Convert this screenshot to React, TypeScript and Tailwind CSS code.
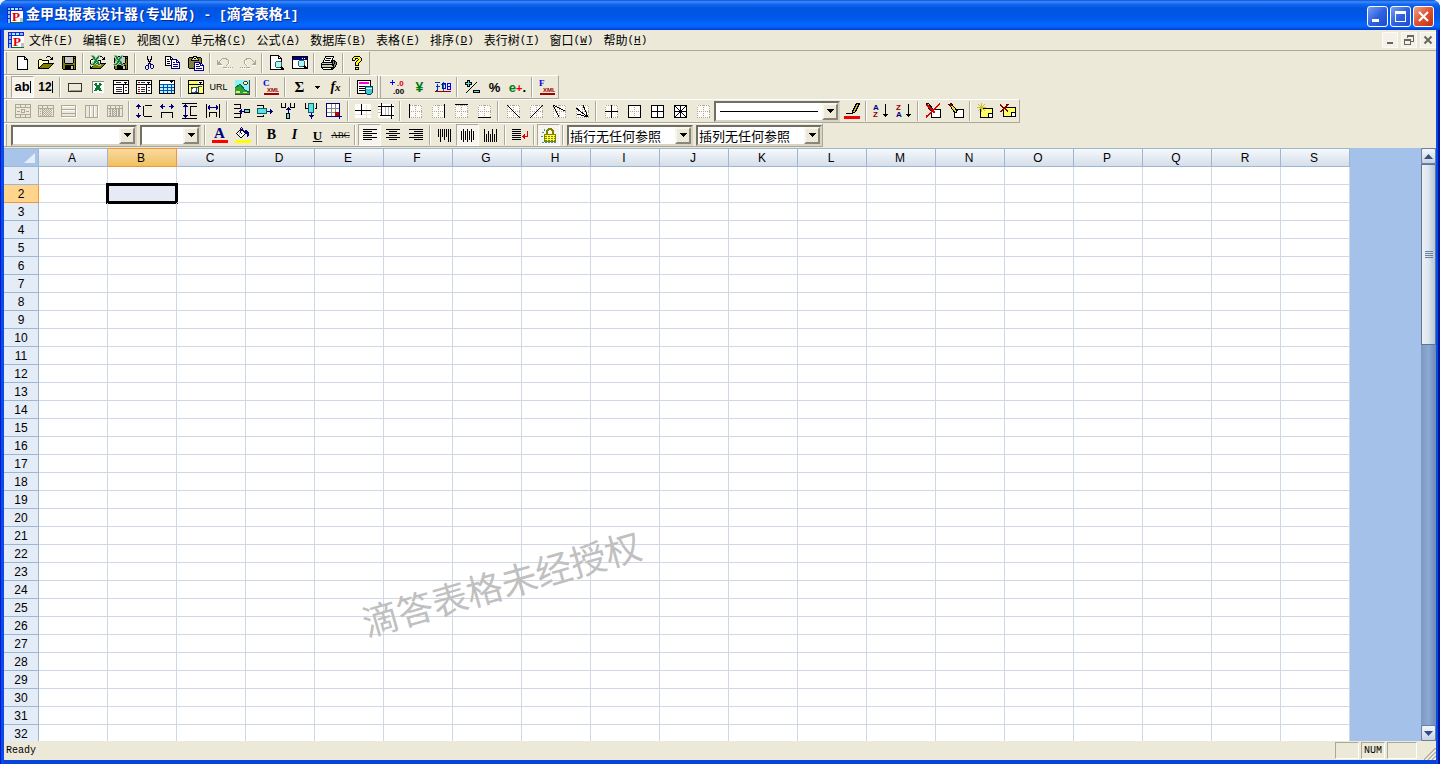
import { Fragment, type ReactNode } from "react";

const palette: Record<string, string> = {
  k: "#000000", w: "#ffffff", y: "#ffff80", Y: "#ffff00", o: "#808000", n: "#000080", b: "#0000ff",
  c: "#80ffff", t: "#008080", g: "#808080", l: "#c8c8c0", r: "#ff0000", m: "#900000", G: "#108040", e: "#aca899",
};

function Pixels({ rows }: { rows: string[] }) {
  const paths: Record<string, string> = {};
  rows.forEach((row, y) => {
    let x = 0;
    while (x < row.length) {
      const ch = row[x];
      let n = 1;
      while (row[x + n] === ch) n++;
      if (palette[ch]) paths[ch] = (paths[ch] ?? "") + `M${x} ${y}h${n}v1h-${n}z`;
      x += n;
    }
  });
  return <>{Object.keys(paths).map((k) => <path key={k} d={paths[k]} fill={palette[k]} />)}</>;
}

function Ico({ rows, children }: { rows?: string[]; children?: ReactNode }) {
  return (
    <svg width="16" height="16" viewBox="0 0 16 16" shapeRendering="crispEdges" aria-hidden="true" className="block shrink-0">
      {rows && <Pixels rows={rows} />}
      {children}
    </svg>
  );
}

function L({ d, c = "#000", f = "none", w = 1, dash }: { d: string; c?: string; f?: string; w?: number; dash?: string }) {
  return <path d={d} stroke={c} fill={f} strokeWidth={w} strokeDasharray={dash} />;
}

const newRows = [
  "", "..kkkkkkkk", "..kwwwwwwkk", "..kwwwwwwkwk", "..kwwwwwwkkkk", "..kwwwwwwwwwk", "..kwwwwwwwwwk", "..kwwwwwwwwwk",
  "..kwwwwwwwwwk", "..kwwwwwwwwwk", "..kwwwwwwwwwk", "..kwwwwwwwwwk", "..kwwwwwwwwwk", "..kwwwwwwwwwk", "..kkkkkkkkkkk",
];
const openRows = [
  "", ".........kkk", "........k...k.k.", ".............kk.", ".kkk........kkk.", "kywykkkkkkk.....", "kwywywywywk.....",
  "kywywywywyk.....", "kwywykkkkkkkkkkk", "kywykoooooooook.", "kwykoooooooook..", "kykoooooooook...", "kkoooooooook....", "kkkkkkkkkkk.....",
];
const saveRows = [
  "", ".kkkkkkkkkkkkkk", ".kokllllllllkok", ".kokllllllllkkk", ".kokllllllllkok", ".kokllllllllkok", ".kokllllllllkok",
  ".kokllllllllkok", ".kookkkkkkkkook", ".kooooooooooook", ".kookkkkkkkkkok", ".kookkkkkkllkok", ".kookkkkkkllkok",
  ".kookkkkkkllkok", "..kkkkkkkkkkkkk",
];
const cutRows = [
  "", ".....k...k", ".....k...k", ".....k...k", ".....kk.kk", "......k.k", "......kkk", ".......k", "......nnn", "......n.nnn",
  "....nnn.n..n", "...n..n.n..n", "...n..n.n..n", "...n..n..nn", "....nn",
];
const copyRows = [
  "", "kkkkkk", "kwwwwkk", "kwwwwkwk", "kwkkwknnnnnn", "kwwwwwnwwwwnn", "kwkkkwnwwwwnwn", "kwwwwwnwnnwnnnn", "kwkkkwnwwwwwwwn",
  "kwwwwwnwnnnnnwn", "kkkkkknwwwwwwwn", "......nwnnnnnwn", "......nwwwwwwwn", "......nnnnnnnnn",
];
const pasteRows = [
  "", ".....kkkk", ".kkkkkyykkkkk", "kogokykkykogok", "kgokllllllkogk", "kogkkkkkkkkgok", "kgogogogogogok",
  "kogogonnnnnnok", "kgogognwwwwnnk", "kogogonwnnnwnwn", "kgogognwwwwwnnnn", "kogogonwnnnnwwwn", "kgogognwwwwwwwwn",
  ".kkkkknwnnnnnnwn", "......nwwwwwwwwn", "......nnnnnnnnnn",
];
const undoRows = [
  "", "", "", ".....eeeee", "....e....ee", "e..e.......e", "e.e........ew", "eee........ew", "eeee.......ew", "eeeee.....ew", ".wwwww...ew", "", "......eeee.e.e.e", ".......wwww.w.w.",
];
const redoRows = [
  "", "", "", "......eeeee", ".....ee....e", "....e.......e..e", "....ew.......e.e", "....ew........eee", "....ew.......eeee", ".....ew.....eeeee", "......ew....wwww", "", "e.e.e.eeee", ".w.w.w.wwww",
];
const printRows = [
  "", "....kkkkkkkkk", "....kwwwwwwwk", "...kwkkkkkwk", "...kwwwwwwwk", "..kwkkkkkwkkkk", "..kwwwwwwwkkgkk", ".kkkkkkkkkkkgkgk", "kllllllllllkgkgk",
  "kkkkkkkkkkkkkggk", "klllllllYYlkkgk", "klllllllllllkgk", "kkkkkkkkkkkkkk", ".kwwwwwwwwkkk", "..kkkkkkkkkk",
];
const helpRows = [
  "", "....kkkkkk", "...kYYYYYYk", "..kYYkkkYYYk", "..kYYk..kYYk", "..kkk..kYYYk", "......kYYYk", ".....kYYYk", ".....kYYk", ".....kYYk",
  ".....kkkk", "", ".....kkkk", ".....kYYk", ".....kkkk",
];
const bucketRows = [
  "......n", ".....n.n", ".....nkn", "....knkkn.nn", "...kwnwwknnnn", "..kwlkwwwknnnn", ".kwwlwkwwwknnn", "..kwlwwwwk..nn", "...kwwwwk...nn", "....kwwk....n", ".....kk",
];

function Magnifier({ x = 0, y = 0 }: { x?: number; y?: number }) {
  return (
    <g transform={`translate(${x} ${y})`}>
      <circle cx="9.5" cy="9.5" r="3.2" fill="#9ff" stroke="#555" />
      <L d="M12 12l3 3" w={2} />
    </g>
  );
}

function ExcelMark() {
  return (
    <>
      <path d="M0 0h4l2 3 2-3h3L7.500 5 11 10H7.500L5.500 7.500 3.500 10H0l4-5z" fill="#128040" stroke="#e6f2e6" strokeWidth=".6" />
      <L d="M1 1l7 9M2 9l6-8" c="#a8d8b8" dash="1 1" />
    </>
  );
}

const hatch = "M2 6.5h12M2 8.5h12M2 10.5h12M2 12.5h12";

function Dotted() {
  return (
    <>
      <path d="M2 2h13v13H2z" fill="#fbfaf5" />
      <L d="M2.5 2.5h12v12h-12zM8.5 2v13M2 8.5h13" c="#aaa69a" dash="1 1" />
    </>
  );
}
const edge = (d: string) => <Ico><Dotted /><L d={d} /></Ico>;

const arrowsV = (x: number) => (
  <path d={`M${x} 1h1v1h1v1h1v1h-2v2h-1v-2h-2v-1h1v-1h1zM${x} 15h1v-1h1v-1h1v-1h-2v-2h-1v2h-2v1h1v1h1z`} fill="#000080" />
);

function Mini({ x, y, s, c, t, fam = "Liberation Sans" }: { x: number; y: number; s: number; c: string; t: string; fam?: string }) {
  return <text x={x} y={y} fontSize={s} fill={c} fontWeight="bold" fontFamily={`${fam}, sans-serif`}>{t}</text>;
}

const gray = "#aca899";
const navy = "#000080";
const cyan = "#5fe0e8";

const icons: Record<string, ReactNode> = {
  新建: <Ico rows={newRows} />,
  打开: <Ico rows={openRows} />,
  保存: <Ico rows={saveRows} />,
  导入Excel: <Ico rows={openRows}><ExcelMark /></Ico>,
  导出Excel: <Ico rows={saveRows}><ExcelMark /></Ico>,
  剪切: <Ico rows={cutRows} />,
  复制: <Ico rows={copyRows} />,
  粘贴: <Ico rows={pasteRows} />,
  撤消: <Ico rows={undoRows} />,
  重做: <Ico rows={redoRows} />,
  打印预览: <Ico><L d="M1.5 .5h8l3 3v11h-11z" f="#fff" /><L d="M9.5 .5v3h3" /><Magnifier /></Ico>,
  页面设置: <Ico><L d="M.5 1.5h15v12H.5z" f="#fff" /><path d="M1 2h14v3H1z" fill="#000080" /><path d="M10 3h1v1h-1zM12 3h1v1h-1z" fill="#fff" /><Magnifier y={-1} /></Ico>,
  打印: <Ico rows={printRows} />,
  帮助主题: <Ico rows={helpRows} />,
  按钮: <Ico><rect x="1.5" y="4.5" width="13" height="8" rx="1" fill="#ece9d8" stroke="#333" /><L d="M3 11.5h11" c="#999" /></Ico>,
  复选框: <Ico><path d="M2 2h12v12H2z" fill="#fff" /><L d="M2.5 14V2.5H14" c="#888" /><L d="M5 4.500l6 7.500M11 4.500l-6 7.500" c="#067a2c" w={2.4} /></Ico>,
  下拉框: <Ico><L d="M.5 1.5h15v4H.5zM.5 5.5h10v9H.5z" f="#fff" /><L d="M10.5 5.500h5v9h-5z" f="#fff" /><L d="M3 3.500h5M3 8.500h6M3 10.500h6M3 12.500h6M12 8.500h2M12 11.500h2" c="#333" /><path d="M10 3h4l-2 2z" /></Ico>,
  列表框: <Ico><L d="M.5 1.5h15v4H.5zM.5 5.5h10v9H.5z" f="#fff" /><L d="M10.500 5.500h5v9h-5z" f="#fff" /><L d="M5 3.500h4M5 8.500h4M5 10.500h4M5 12.500h4M12 8.500h2M12 11.500h2" c="#333" /><L d="M2 3.500h2M2 8.500h2M2 10.500h2M2 12.500h2" c="#b00000" /><path d="M10 3h4l-2 2z" /></Ico>,
  表格下拉框: <Ico><L d="M.5 1.5h15v13H.5z" f="#fff" /><path d="M1 5h14v9H1z" fill="#b8f0ff" /><L d="M1 5.500h14M4.500 5v9M8.500 5v9M12.500 5v9M1 8.500h14M1 11.500h14" c="#0050b0" /><path d="M10 2h4l-2 2z" /></Ico>,
  日期控件: <Ico><L d="M.5 1.5h15v4H.5z" f="#fff" /><path d="M1 2h9v3H1zM1 6h14v8H1z" fill="#ffff66" /><path d="M10 3h4l-2 2z" /><L d="M.5 6v8.500h15V6" /><L d="M3.500 8.500h7v5h-7z" c="#234" f="#b8f4ff" /><circle cx="6" cy="11" r="2.500" fill="#fff" stroke="#357" /><L d="M8 10l3-3h3" c="#357" /></Ico>,
  图片: <Ico><path d="M1 1h14v14H1z" fill="#8ff0f4" /><L d="M15.500 1v14.500H1" c="#444" /><path d="M1 9l5-4 5 7h4v3H1z" fill="#2fa13a" /><L d="M1 9l5-4 5 6 4 2" c="#064" /><circle cx="11.500" cy="4" r="1.800" fill="#ffffa0" stroke="#333" /><path d="M2 12h4v2H2zM9 13h4v1H9z" fill="#e8f060" /></Ico>,
  HTML: <Ico><Mini x={0} y={7} s={9} c="#0000e0" t="C" fam="Liberation Serif" /><Mini x={4} y={13} s={6} c="#900" t="XML" /><path d="M1 14h15v2H1z" fill="#a00000" /></Ico>,
  数据集: <Ico><L d="M.5 1.500h13v13H.5z" f="#fff" /><path d="M2 3h10v2H2z" fill="#f0c" /><L d="M2 7.500h7M2 9.500h6M2 11.500h6" /><L d="M8.500 7.500h7v6l-2 2h-3l-2-2z" c="#045" f="#3cc8d0" /><L d="M9 9.500h6" c="#dff" /></Ico>,
  小数位: <Ico><Mini x={8} y={7} s={8} c="#e00000" t=".0" /><Mini x={4} y={15} s={8} c="#000" t=".00" /><L d="M1 3.500h5M3.500 1v5" c="#0000ff" /></Ico>,
  大写金额: <Ico><L d="M2.500 5v6h-2M0 3.500h5M1 7.500h4" c="#0030c0" /><L d="M8.500 3v9M6 5.500h5" c="#008020" /><L d="M7.500 4.500h3v5h-3zM12.500 4.500h3v6h-3zM12 7.500h3" c="#0000ff" /><path d="M0 12h16v1H0z" fill="#900" /></Ico>,
  加减: <Ico><L d="M3.500 1.500h2v2h2v2h-2v2h-2v-2h-2v-2h2z" f={cyan} /><L d="M2 14L13 3" /><L d="M9.500 11.500h6v2h-6z" f={cyan} /></Ico>,
  XML: <Ico><Mini x={0} y={7} s={9} c="#0000e0" t="F" fam="Liberation Serif" /><Mini x={4} y={13} s={6} c="#900" t="XML" /><path d="M1 14h15v2H1z" fill="#a00000" /></Ico>,
  合并单元格: <Ico><L d="M.5 1.500h15v13H.5zM0 4.500h16M0 11.500h16M5.500 1v3M10.500 1v3M5.500 11v3M10.500 11v3M2 8.500h3M11 8.500h3M6.500 6.500h3v3h-3z" c={gray} /></Ico>,
  取消合并: <Ico><L d="M.5 2.500h15v11H.5zM0 5.500h16M4.500 2v12M9.500 2v3" c={gray} /><L d={hatch} c={gray} dash="1 1" /><L d="M5 7.500h10M5 9.500h10M5 11.500h10" c={gray} dash="1 1" /></Ico>,
  按行合并: <Ico><L d="M.5 2.500h14v11H.5zM0 6.500h15M0 10.500h15" c={gray} /><L d="M1 14.500h14.500V3M1 7.500h13M1 3.500h13" c="#fff" /></Ico>,
  按列合并: <Ico><L d="M1.500 2.500h12v12h-12zM5.500 2v12M9.500 2v12" c={gray} /><L d="M6.500 3v11M10.500 3v11M14.500 3v12" c="#fff" /></Ico>,
  组合单元格: <Ico><L d="M.5 2.500h15v11H.5zM0 5.500h16M3.500 2v12M12.500 2v12M8 2v3" c={gray} /><L d={hatch} c={gray} dash="2 1" /><L d="M3 7.500h10M3 9.500h10M3 11.500h10" c={gray} dash="1 1" /></Ico>,
  最适行高: <Ico>{arrowsV(2)}<L d="M16 2.500H8.500M7.500 3v10M8 13.500h8" /></Ico>,
  最适列宽: <Ico><path d="M1 4v-1h1v-1h1v-1h1v2h2v1h-2v2h-1v-1h-1v-1zM15 4v-1h-1v-1h-1v-1h-1v2h-2v1h2v2h1v-1h1v-1z" fill={navy} /><L d="M2.500 15V9.500h11V15" /></Ico>,
  统一行高: <Ico>{arrowsV(3)}<L d="M0 .5h15M0 15.500h15M15 3.500H8.500v9H15" /><L d="M3.500 5v6" c={navy} /></Ico>,
  统一列宽: <Ico><L d="M3 4.500h10M4.500 2v5M11.500 2v5M3.500 3v3M12.500 3v3" c={navy} /><L d="M1.500 1v14M14.500 1v14M4.500 14V9.500h7V14" /></Ico>,
  插入行: <Ico><L d="M0 1.500h6.500v4H0M0 10.500h6.500v4H0" /><L d="M10.500 6.500h5v3h-5z" f={cyan} /><L d="M5 8.500h5M7.500 6v5M6.500 7v3" c={navy} /></Ico>,
  追加行: <Ico><L d="M0 2.500h6v2M0 13.500h6v-2" /><L d="M.5 5.500h9v5h-9z" f={cyan} c="#066" /><L d="M10 8.500h6M13.500 6v5M14.500 7v3" c={navy} /></Ico>,
  插入列: <Ico><L d="M1.500 0v4.500h4V0M10.500 0v4.500h4V0" /><L d="M6.500 10.500h3v5h-3z" f={cyan} /><L d="M8.500 4v6M6 6.500h5M7 5.500h3" c={navy} /></Ico>,
  追加列: <Ico><L d="M2.500 0v5h2M13.500 0v5h-2" /><L d="M5.500 .5h5v9h-5z" f={cyan} c="#066" /><L d="M8.500 10v6M6 12.500h5M7 13.500h3" c={navy} /></Ico>,
  表格尺寸: <Ico><L d="M.5 .5h13v13h-13z" c={navy} f="#fff" /><L d="M5.500 1v12M9.500 1v12M1 5.500h12M1 9.500h12" c="#888" /><path d="M9 9h5v5H9z" fill="#c00000" /><L d="M9 13.500h7M13.500 9v7" c={navy} /></Ico>,
  冻结: <Ico><path d="M0 1h16v14H0z" fill="#fff" /><L d="M0 11.500h16M11.500 2v13" c="#e8e4d8" /><L d="M0 7.500h16M6.500 1v11" /></Ico>,
  标题行: <Ico><path d="M0 1h16v14H0z" fill="#fff" /><L d="M0 6.500h3M0 9.500h3M7.500 4v8M10.500 4v8" c="#bbb" /><L d="M3.500 0v13M0 3.500h16M13.500 1v15M2 12.500h14" /></Ico>,
  左边框: edge("M2.500 1v14"),
  右边框: edge("M14.500 1v14"),
  上边框: edge("M2 1.500h13"),
  下边框: edge("M2 14.500h13"),
  斜线: edge("M2 2l13 13"),
  反斜线: edge("M2 15L15 2"),
  双斜线: edge("M2 2l12 6M2 2l6 12"),
  反双斜线: edge("M2 5l12 9M9 2l5 12M3 11l11 3"),
  内边框: edge("M8.500 2v13M2 8.500h13"),
  外边框: edge("M2.500 2.500h12v12h-12z"),
  全边框: <Ico><L d="M2.500 2.500h12v12h-12zM8.500 2v13M2 8.500h13" f="#fff" /></Ico>,
  米字框: <Ico><L d="M2.500 2.500h12v12h-12zM8.500 2v13M2 8.500h13M3 3l11 11M14 3L3 14" f="#fff" /></Ico>,
  无边框: edge(""),
  边框颜色: <Ico><path d="M0 13h16v3H0z" fill="#f00000" /><L d="M8.500 8.500l4-8h3l-4 8-3 2z" f="#c8b820" /><L d="M2 10.500h7" /></Ico>,
  升序: <Ico><Mini x={0} y={7} s={8} c={navy} t="A" /><Mini x={0} y={14} s={8} c="#900000" t="Z" /><L d="M12.500 1v13M10 11.500h5M11 12.500h3" /></Ico>,
  降序: <Ico><Mini x={0} y={7} s={8} c="#900000" t="Z" /><Mini x={0} y={14} s={8} c={navy} t="A" /><L d="M12.500 1v13M10 11.500h5M11 12.500h3" /></Ico>,
  删除批注: <Ico><L d="M6.500 6.500h9v8h-9z" f="#fff" /><L d="M1 1l2-1 5 6-1 2-2-1z" f="#e8e040" /><L d="M1 14L15 1M2 2l8 8" c="#e00000" w={1.5} /></Ico>,
  编辑批注: <Ico><L d="M6.500 6.500h9v8h-9z" f="#fff" /><L d="M1 1.500l2-1 6 7-1 2-2-1z" f="#e8e040" /><path d="M0 2l3-2 1 2-2 2z" fill="#700" /></Ico>,
  新建表页: <Ico><L d="M3.500 5.500h12v9h-12z" f="#ffff66" /><path d="M11 10h4v4h-4z" fill="#fff" stroke="#000" /><L d="M4.500 0v9M0 4.500h9M1 1l7 7M8 1L1 8" c="#c8c030" /></Ico>,
  删除表页: <Ico><L d="M3.500 4.500h12v9h-12z" f="#ffff66" /><path d="M11 9h4v4h-4z" fill="#fff" stroke="#000" /><L d="M0 2l8 6M8 1L1 9" c="#800000" w={1.6} /></Ico>,
  字体颜色: <Ico><Mini x={2} y={11} s={15} c={navy} t="A" fam="Liberation Serif" /><path d="M0 13h16v3H0z" fill="#ff0000" /></Ico>,
  填充颜色: <Ico rows={bucketRows}><path d="M0 13h16v3H0z" fill="#ffff00" /></Ico>,
  左对齐: <Ico><L d="M1 2.500h14M1 4.500h9M1 6.500h14M1 8.500h9M1 10.500h14M1 12.500h9" /></Ico>,
  居中: <Ico><L d="M1 2.500h14M4 4.500h8M1 6.500h14M4 8.500h8M1 10.500h14M4 12.500h8" /></Ico>,
  右对齐: <Ico><L d="M1 2.500h14M6 4.500h9M1 6.500h14M6 8.500h9M1 10.500h14M6 12.500h9" /></Ico>,
  顶端对齐: <Ico><L d="M1.500 2v8M3.500 2v13M5.500 2v8M7.500 2v11M9.500 2v8M11.500 2v13M13.500 2v13" /></Ico>,
  垂直居中: <Ico><L d="M1.500 4v9M3.500 2v13M5.500 4v9M7.500 2v13M9.500 4v9M11.500 2v13M13.500 4v9" /></Ico>,
  底端对齐: <Ico><L d="M1.500 2v13M3.500 7v8M5.500 4v11M7.500 7v8M9.500 2v13M11.500 7v8M13.500 2v13" /></Ico>,
  自动换行: <Ico><L d="M0 2.500h9M0 4.500h9M0 6.500h9M0 8.500h9M0 10.500h9M0 12.500h9" /><L d="M15.500 4v5H10M12.500 7v5M11.500 8v3" c="#e00000" /></Ico>,
  锁定: <Ico><L d="M6 8V4l2-2h2l2 2v4" c="#808000" w={2} /><L d="M3.500 7.500h11v7h-11z" c="#808000" f="#ffff40" /><L d="M4 9.500h10M4 11.500h10M4 13.500h10" c="#808000" dash="2 1" /><L d="M1 5l3 2M3 2l2 3M0 9.500h2M1 15.500h15" c="#2a9ab0" dash="2 1" /></Ico>,
};

const glyphs: Record<string, ReactNode> = {
  文本: <span className="border-r border-black text-[13px] leading-3 font-bold">ab</span>,
  数字: <span className="border-r border-black text-[12px] leading-3 font-bold">12</span>,
  超链接: <span className="text-[9px]">URL</span>,
  求和: <span className="font-['Liberation_Serif',serif] text-[15px] font-bold">Σ</span>,
  函数: <span className="font-['Liberation_Serif',serif] text-[14px] font-bold italic">f<span className="text-[11px]">x</span></span>,
  货币: <span className="text-[14px] font-bold text-[#007818]">¥</span>,
  百分比: <span className="text-[13px] font-bold">%</span>,
  科学计数: <span className="text-[13px] font-bold text-[#008020]">e<span className="text-[11px] text-[#e00000]">+</span><span className="text-black">.</span></span>,
  加粗: <span className="font-['Liberation_Serif',serif] text-[14px] font-bold">B</span>,
  倾斜: <span className="font-['Liberation_Serif',serif] text-[14px] font-bold italic">I</span>,
  下划线: <span className="font-['Liberation_Serif',serif] text-[13px] font-bold underline">U</span>,
  删除线: <span className="font-['Liberation_Serif',serif] text-[9px] line-through">ABC</span>,
};

function Tool({ name, on }: { name: string; on?: boolean }) {
  return (
    <button
      type="button"
      aria-label={name}
      className={
        "flex h-[22px] w-[23px] shrink-0 items-center justify-center leading-none " +
        (on ? "border border-t-[#aca899] border-l-[#aca899] border-r-white border-b-white bg-[#f6f4ec]" : "")
      }
    >
      {icons[name] ?? glyphs[name]}
    </button>
  );
}

function Sep() {
  return <span className="mx-[2px] h-5 w-[2px] shrink-0 border-l border-[#aca899] border-r border-r-white" />;
}

function Tools({ names, on = [] }: { names: string; on?: string[] }) {
  return (
    <>
      {names.split("|").map((group, i) => (
        <Fragment key={i}>
          {i > 0 && <Sep />}
          {group.trim().split(" ").map((n) => <Tool key={n} name={n} on={on.includes(n)} />)}
        </Fragment>
      ))}
    </>
  );
}

function Bar({ label, children }: { label: string; children: ReactNode }) {
  return (
    <div role="toolbar" aria-label={label} className="flex h-6 items-center border-t border-r border-b border-t-white border-r-[#aca899] border-b-[#aca899]">
      <span className="mr-1 h-full w-[3px] shrink-0 border-r border-l border-l-white border-r-[#aca899]" />
      {children}
    </div>
  );
}

function Combo({ label, options, wide, line }: { label: string; options: string[]; wide?: boolean; line?: boolean }) {
  return (
    <div className={"grid h-[21px] shrink-0 grid-cols-[minmax(0,1fr)_16px] border-2 border-t-[#716f64] border-l-[#716f64] border-r-[#d8d4c4] border-b-[#d8d4c4] bg-white " + (wide ? "w-[126px]" : "w-[61px]")}>
      <select aria-label={label} className="col-span-2 col-start-1 row-start-1 appearance-none bg-transparent pl-px text-[13px] leading-[17px] text-black outline-none">
        {options.map((o) => <option key={o}>{o}</option>)}
      </select>
      {line && <span className="col-start-1 row-start-1 mx-1 self-center border-t border-black" />}
      <span className="pointer-events-none col-start-2 row-start-1 flex items-center justify-center border-2 border-t-[#f8f6ee] border-l-[#f8f6ee] border-r-[#8a877a] border-b-[#8a877a] bg-[#ece9d8]">
        <svg width="7" height="4" viewBox="0 0 7 4" shapeRendering="crispEdges" aria-hidden="true"><path d="M0 0h7v1h-1v1h-1v1h-1v1h-1v-1h-1v-1h-1v-1h-1z" /></svg>
      </span>
    </div>
  );
}

function AppIcon() {
  return (
    <svg width="16" height="16" viewBox="0 0 16 16" shapeRendering="crispEdges" aria-hidden="true" className="shrink-0">
      <path d="M0 0h16v16H0z" fill="#fff" />
      <path d="M0 0h16v4H0zM0 4h4v12H0z" fill="#78c8ff" />
      <path d="M4 1h3v2H4zM8 1h3v2H8z" fill="#80ffff" />
      <path d="M0 .5h16M0 3.500h16M0 7.500h4M0 11.500h4M.5 0v16M3.500 0v16M7.500 0v3M11.500 0v3M15.500 0v4" stroke="#2020d0" fill="none" />
      <path d="M4 15h12v1H4z" fill="#107030" />
      <path d="M13 11h3v4h-3z" fill="#c0c0c0" />
      <text x="5" y="14" fontSize="13" fontWeight="bold" fill="#e00000" fontFamily="Liberation Serif, serif">P</text>
    </svg>
  );
}

const menus: [string, string][] = [
  ["文件", "F"], ["编辑", "E"], ["视图", "V"], ["单元格", "C"], ["公式", "A"], ["数据库", "B"],
  ["表格", "F"], ["排序", "D"], ["表行树", "T"], ["窗口", "W"], ["帮助", "H"],
];
const columns = "ABCDEFGHIJKLMNOPQRS".split("");
const rowNumbers = Array.from({ length: 32 }, (_, i) => i + 1);

const capBtn = "flex h-[21px] w-[21px] items-center justify-center rounded-[3px] border border-white ";
const blueCap = capBtn + "bg-linear-to-br from-[#7a9df0] via-[#2f62e0] to-[#1c4bd0]";
const mdiBtn = "flex h-4 w-4 items-center justify-center border border-[#fbfaf6] bg-[#f3f1e8]";
const scrollBtn = "flex h-4 w-full shrink-0 items-center justify-center rounded-[2px] border border-[#6b7f9e] bg-linear-to-b from-[#f4f7fb] to-[#c5d3e6]";

export default function App() {
  return (
    <div className="h-screen bg-[#e8eef8] font-['Liberation_Sans','Noto_Sans_CJK_SC',sans-serif] text-[12px] text-black">
      <div className="flex h-full flex-col overflow-hidden rounded-t-[8px] bg-[linear-gradient(90deg,#0019cf_0_1px,#0a4be8_1px_4px,#0844d8_4px,#0844d8_calc(100%-4px),#0a4be8_calc(100%-4px)_calc(100%-2px),#00139c_calc(100%-2px))]">
        <header className="flex h-[30px] shrink-0 items-center bg-[linear-gradient(180deg,#0a4fd8_0%,#3c8cf8_6%,#1268f0_14%,#0054e0_28%,#0058ea_60%,#0466fc_82%,#0560f4_90%,#003dd0_100%)] pr-[6px] pl-[7px]">
          <AppIcon />
          <h1 className="ml-[3px] flex-1 text-[14px] leading-[18px] font-bold whitespace-pre text-white [text-shadow:1px_1px_0_#0a2a90]">
            金甲虫报表设计器<span className="font-['Liberation_Mono',monospace] text-[13px]">(</span>专业版<span className="font-['Liberation_Mono',monospace] text-[13px]">) - [</span>滴答表格<span className="font-['Liberation_Mono',monospace] text-[13px]">1]</span>
          </h1>
          <div className="flex gap-[2px] pt-[3px]">
            <button type="button" aria-label="最小化" className={blueCap}>
              <svg width="15" height="15" viewBox="0 0 15 15"><path d="M2 10h7v3H2z" fill="#fff" /></svg>
            </button>
            <button type="button" aria-label="最大化" className={blueCap}>
              <svg width="15" height="15" viewBox="0 0 15 15"><path d="M2 2h11v11H2zM3 5v7h9V5z" fill="#fff" fillRule="evenodd" /></svg>
            </button>
            <button type="button" aria-label="关闭" className={capBtn + "bg-linear-to-br from-[#f0a088] via-[#e05030] to-[#c03010]"}>
              <svg width="15" height="15" viewBox="0 0 15 15"><path d="M3 3l9 9M12 3l-9 9" stroke="#fff" strokeWidth="2.200" /></svg>
            </button>
          </div>
        </header>

        <div className="mx-1 mb-1 flex min-h-0 flex-1 flex-col bg-[#ece9d8]">
          <nav className="flex h-[21px] shrink-0 items-center border-b border-[#aca899] pl-1">
            <AppIcon />
            <div className="ml-[5px] flex flex-1 gap-[10px] font-['Noto_Sans_CJK_SC',sans-serif] leading-4">
              {menus.map(([name, key]) => (
                <button key={name} type="button" className="flex items-center whitespace-nowrap">
                  {name}<span className="font-['Liberation_Mono',monospace] text-[11px]">(<u>{key}</u>)</span>
                </button>
              ))}
            </div>
            <div className="flex gap-[3px] pb-px">
              <button type="button" aria-label="最小化文档" className={mdiBtn}>
                <svg width="12" height="12" viewBox="0 0 12 12"><path d="M3 8h6v2H3z" fill="#6a675a" /></svg>
              </button>
              <button type="button" aria-label="还原文档" className={mdiBtn}>
                <svg width="12" height="12" viewBox="0 0 12 12" shapeRendering="crispEdges"><path d="M4 4V1.500h6.500V7H8M4 2.500h6M1.500 5.500h6v5h-6zM1 6.500h6" stroke="#6a675a" fill="none" /></svg>
              </button>
              <button type="button" aria-label="关闭文档" className={mdiBtn}>
                <svg width="12" height="12" viewBox="0 0 12 12"><path d="M2.500 2.500l7 7M9.500 2.500l-7 7" stroke="#6a675a" strokeWidth="2" /></svg>
              </button>
            </div>
          </nav>

          <div className="flex shrink-0 flex-col items-start pb-px">
            <Bar label="标准">
              <Tools names="新建 打开 保存|导入Excel 导出Excel|剪切 复制 粘贴|撤消 重做|打印预览 页面设置|打印|帮助主题" />
            </Bar>
            <div className="flex">
              <Bar label="控件">
                <Tools names="文本 数字|按钮 复选框 下拉框 列表框 表格下拉框|日期控件 超链接 图片|HTML|求和" on={["文本"]} />
                <button type="button" aria-label="求和选项" className="flex w-[13px] justify-center">
                  <svg width="5" height="3" viewBox="0 0 5 3" shapeRendering="crispEdges"><path d="M0 0h5v1h-1v1h-1v1h-1v-1h-1v-1h-1z" /></svg>
                </button>
                <Tools names="函数|数据集" />
                <span className="w-px" />
              </Bar>
              <Bar label="格式">
                <Tools names="小数位 货币 大写金额|加减 百分比 科学计数|XML" />
              </Bar>
            </div>
            <Bar label="表格">
              <Tools names="合并单元格 取消合并 按行合并 按列合并 组合单元格|最适行高 最适列宽 统一行高 统一列宽|插入行 追加行 插入列 追加列 表格尺寸|冻结 标题行|左边框 右边框 上边框 下边框|斜线 反斜线 双斜线 反双斜线|内边框 外边框 全边框 米字框 无边框" />
              <Combo label="线型" options={[""]} wide line />
              <Tools names="边框颜色|升序 降序|删除批注 编辑批注|新建表页 删除表页" />
            </Bar>
            <Bar label="字体">
              <div className="flex gap-[3px] pr-px">
                <Combo label="字体" options={[""]} wide />
                <Combo label="字号" options={[""]} />
              </div>
              <Sep />
              <Tools names="字体颜色 填充颜色|加粗 倾斜 下划线 删除线|左对齐 居中 右对齐|顶端对齐 垂直居中 底端对齐|自动换行|锁定" on={["左对齐", "垂直居中", "锁定"]} />
              <Sep />
              <div className="flex gap-[3px] pl-px font-['Noto_Sans_CJK_SC',sans-serif]">
                <Combo label="插行参照" options={["插行无任何参照"]} wide />
                <Combo label="插列参照" options={["插列无任何参照"]} wide />
              </div>
            </Bar>
          </div>

          <main className="flex min-h-0 flex-1 bg-[#a4c2e9]">
            <div className="relative min-w-0 flex-1 overflow-hidden">
              <table className="w-[1346px] table-fixed border-separate border-spacing-0 bg-white leading-[16px]">
                <colgroup>
                  <col className="w-[35px]" />
                  {columns.map((c) => <col key={c} className="w-[69px]" />)}
                </colgroup>
                <thead>
                  <tr className="h-[19px]">
                    <td className="border border-l-0 border-[#9eb6ce] bg-[#a9c4e9] p-0">
                      <svg width="11" height="10" viewBox="0 0 11 10" aria-hidden="true" className="mr-[3px] ml-auto block"><path d="M11 0v10H0z" fill="#e4edf8" /></svg>
                    </td>
                    {columns.map((c) => (
                      <th
                        key={c}
                        scope="col"
                        className={
                          "border-t border-r border-b p-0 pr-[2px] font-normal " +
                          (c === "B" ? "border-t-[#f29536] border-r-[#f29536] border-b-[#f29536] bg-linear-to-b from-[#f9d99f] to-[#f1c15f]" : "border-[#9eb6ce] bg-linear-to-b from-[#f6f9fc] to-[#d5deea]")
                        }
                      >
                        {c}
                      </th>
                    ))}
                  </tr>
                </thead>
                <tbody>
                  {rowNumbers.map((n) => (
                    <tr key={n} className="h-[18px]">
                      <th scope="row" className={"border-r border-b p-0 font-normal " + (n === 2 ? "border-[#f29536] bg-[#ffd58d]" : "border-[#9eb6ce] bg-[#e4ecf7]")}>{n}</th>
                      {columns.map((c) => (
                        <td key={c} className="relative border-r border-b border-[#d0d7e5] p-0">
                          {n === 2 && c === "B" && <span className="absolute -top-[2px] -right-[2px] -bottom-[2px] -left-[2px] border-3 border-black bg-[#e6eaf5]" />}
                        </td>
                      ))}
                    </tr>
                  ))}
                </tbody>
              </table>
              <p className="pointer-events-none absolute top-[409px] left-[353px] -rotate-[16deg] font-['Noto_Sans_CJK_SC',sans-serif] text-[36px] leading-[50px] font-normal whitespace-nowrap text-[#c0c0c0]">
                滴答表格未经授权
              </p>
            </div>
            <div role="scrollbar" aria-label="垂直滚动" aria-controls="root" aria-valuenow={0} className="flex w-[15px] shrink-0 flex-col bg-linear-to-r from-[#7c98c0] via-[#8ba9d2] to-[#6d8ab4]">
              <button type="button" aria-label="向上滚动" className={scrollBtn}>
                <svg width="9" height="5" viewBox="0 0 9 5"><path d="M4.500 0L9 5H0z" fill="#405070" /></svg>
              </button>
              <div className="flex min-h-0 flex-1 flex-col">
                <span className="flex h-[181px] flex-col items-center justify-center gap-px border border-[#5f7596] bg-linear-to-r from-[#eef2f6] via-[#dde5ee] to-[#b4c4da]">
                  <span className="h-px w-2 bg-[#6b7f9e]" />
                  <span className="h-px w-2 bg-[#6b7f9e]" />
                  <span className="h-px w-2 bg-[#6b7f9e]" />
                  <span className="h-px w-2 bg-[#6b7f9e]" />
                </span>
              </div>
              <button type="button" aria-label="向下滚动" className={scrollBtn}>
                <svg width="9" height="5" viewBox="0 0 9 5"><path d="M4.500 5L9 0H0z" fill="#304c88" /></svg>
              </button>
            </div>
          </main>

          <footer className="flex h-[19px] shrink-0 items-center pl-[2px] font-['Liberation_Mono',monospace] text-[10px] leading-none">
            <span className="flex-1">Ready</span>
            <div className="flex h-[17px] gap-[2px]">
              <span className="w-6 border border-t-[#aca899] border-r-white border-b-white border-l-[#aca899]" />
              <span className="flex w-6 items-center justify-center border border-t-[#aca899] border-r-white border-b-white border-l-[#aca899]">NUM</span>
              <span className="w-[30px] border border-t-[#aca899] border-r-white border-b-white border-l-[#aca899]" />
            </div>
            <svg width="12" height="12" viewBox="0 0 12 12" aria-hidden="true" className="ml-[7px] self-end">
              <path d="M0 12L12 0M4 12l8-8M8 12l4-4" stroke="#aca899" strokeWidth="1.500" />
              <path d="M1.500 12L12 1.500M5.500 12L12 5.500M9.500 12L12 9.500" stroke="#fff" />
            </svg>
          </footer>
        </div>
      </div>
    </div>
  );
}
